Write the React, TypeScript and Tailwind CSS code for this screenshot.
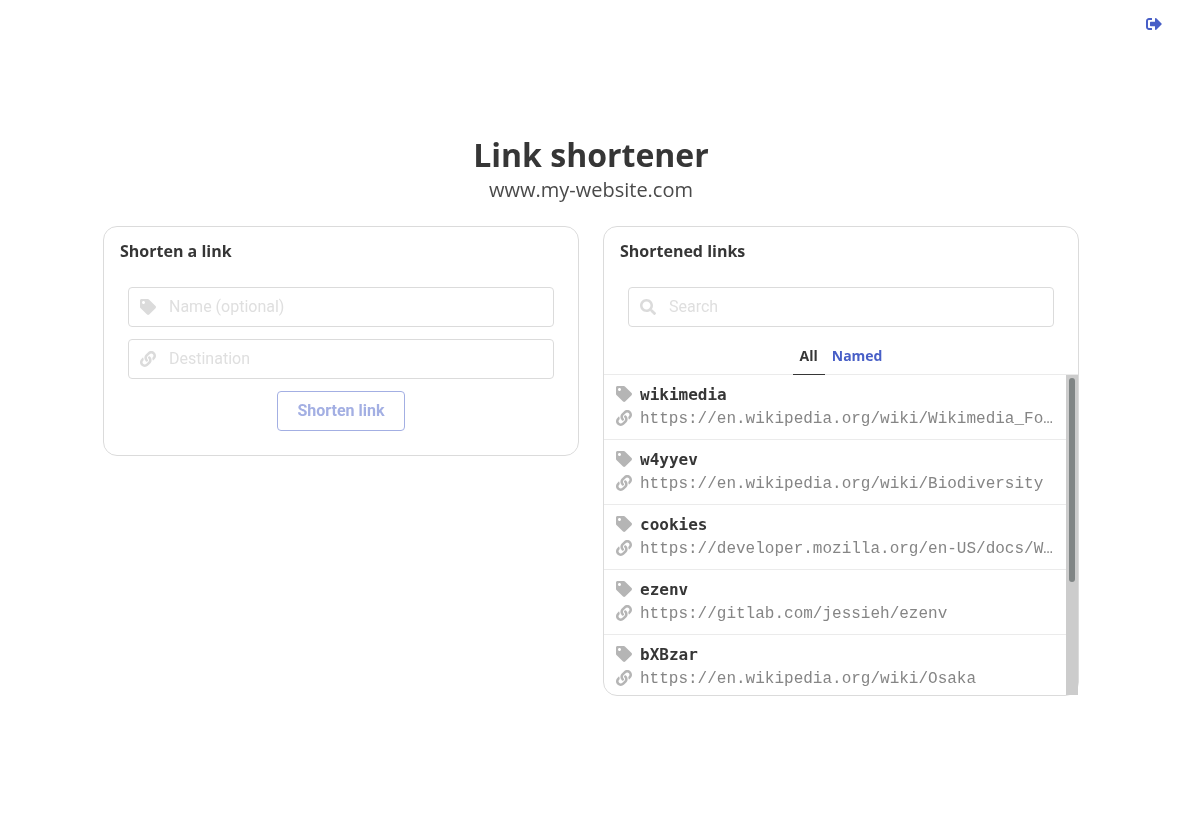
import { FaLink, FaSearch, FaSignOutAlt, FaTag } from "react-icons/fa";

const links = [
  { name: "wikimedia", url: "https://en.wikipedia.org/wiki/Wikimedia_Foundation" },
  { name: "w4yyev", url: "https://en.wikipedia.org/wiki/Biodiversity" },
  { name: "cookies", url: "https://developer.mozilla.org/en-US/docs/Web/HTTP/Cookies" },
  { name: "ezenv", url: "https://gitlab.com/jessieh/ezenv" },
  { name: "bXBzar", url: "https://en.wikipedia.org/wiki/Osaka" },
];

function Field({ icon, placeholder }: { icon: React.ReactNode; placeholder: string }) {
  return (
    <div className="flex h-10 items-center rounded border border-[#dbdbdb] pl-[11px]">
      <span className="flex w-[29px] shrink-0 text-[16px] text-[#dbdbdb]">{icon}</span>
      <span className="font-['Roboto',sans-serif] text-[16px] text-[#dfdfdf]">{placeholder}</span>
    </div>
  );
}

export default function App() {
  return (
    <div className="relative h-[832px] font-['Open_Sans',sans-serif] text-[#363636] will-change-transform">
      {/* Logout */}
      <div className="absolute right-5 top-4 text-[16px] text-[#485fc7]">
        <FaSignOutAlt />
      </div>

      <div className="mx-auto w-[976px] pt-[133px]">
        {/* Title */}
        <div className="flex flex-col items-center">
          <h1 className="text-[32px] font-bold leading-[44px]">Link shortener</h1>
          <p className="-mt-px text-[20px] leading-[27px] text-[#4a4a4a]">www.my-website.com</p>
        </div>

        <div className="mt-[23px] flex items-start gap-6">
          {/* Shorten a link */}
          <div className="h-[230px] w-[476px] rounded-[14px] border border-[#dbdbdb] pl-4 pr-4 pt-[13px]">
            <h2 className="text-[16px] font-bold leading-[22px]">Shorten a link</h2>
            <div className="mt-[25px] flex flex-col gap-3 px-2">
              <Field icon={<FaTag />} placeholder="Name (optional)" />
              <Field icon={<FaLink />} placeholder="Destination" />
              <div className="flex justify-center">
                <button className="h-10 w-32 rounded border border-[#a3afe3] font-['Roboto',sans-serif] text-[16px] font-bold text-[#a3afe3]">
                  Shorten link
                </button>
              </div>
            </div>
          </div>

          {/* Shortened links */}
          <div className="h-[470px] w-[476px] rounded-[14px] border border-[#dbdbdb]">
            <div className="px-4 pt-[13px]">
              <h2 className="text-[16px] font-bold leading-[22px]">Shortened links</h2>
              <div className="mt-[25px] px-2">
                <Field icon={<FaSearch />} placeholder="Search" />
              </div>
            </div>

            <div className="mt-[13px] flex h-[35px] justify-center border-b border-[#ebebeb] text-[14px] font-bold">
              <span className="-mb-px border-b border-[#363636] px-[7px] pt-[5px]">All</span>
              <span className="px-[7px] pt-[5px] text-[#485fc7]">Named</span>
            </div>

            <div className="flex h-[320px]">
              <div className="min-w-0 flex-1 overflow-hidden rounded-bl-[13px]">
                {links.map((link) => (
                  <div key={link.name} className="h-[65px] border-b border-[#ebebeb] pl-3 pr-3 pt-2">
                    <div className="flex h-6 items-center">
                      <span className="mb-[2px] flex w-6 shrink-0 text-[16px] text-[#b5b5b5]"><FaTag /></span>
                      <span className="font-['DejaVu_Sans_Mono',monospace] text-[16px] font-bold text-[#363636]">{link.name}</span>
                    </div>
                    <div className="flex h-6 items-center">
                      <span className="mb-[2px] flex w-6 shrink-0 text-[16px] text-[#b5b5b5]"><FaLink /></span>
                      <span className="truncate font-['Liberation_Mono',monospace] text-[16px] text-[#858585]">{link.url}</span>
                    </div>
                  </div>
                ))}
              </div>
              {/* Scrollbar */}
              <div className="w-3 shrink-0 bg-[#cccccc] pl-[3px] pt-[3px]">
                <div className="h-[204px] w-[6px] rounded-[3px] bg-[#808585]" />
              </div>
            </div>
          </div>
        </div>
      </div>
    </div>
  );
}
